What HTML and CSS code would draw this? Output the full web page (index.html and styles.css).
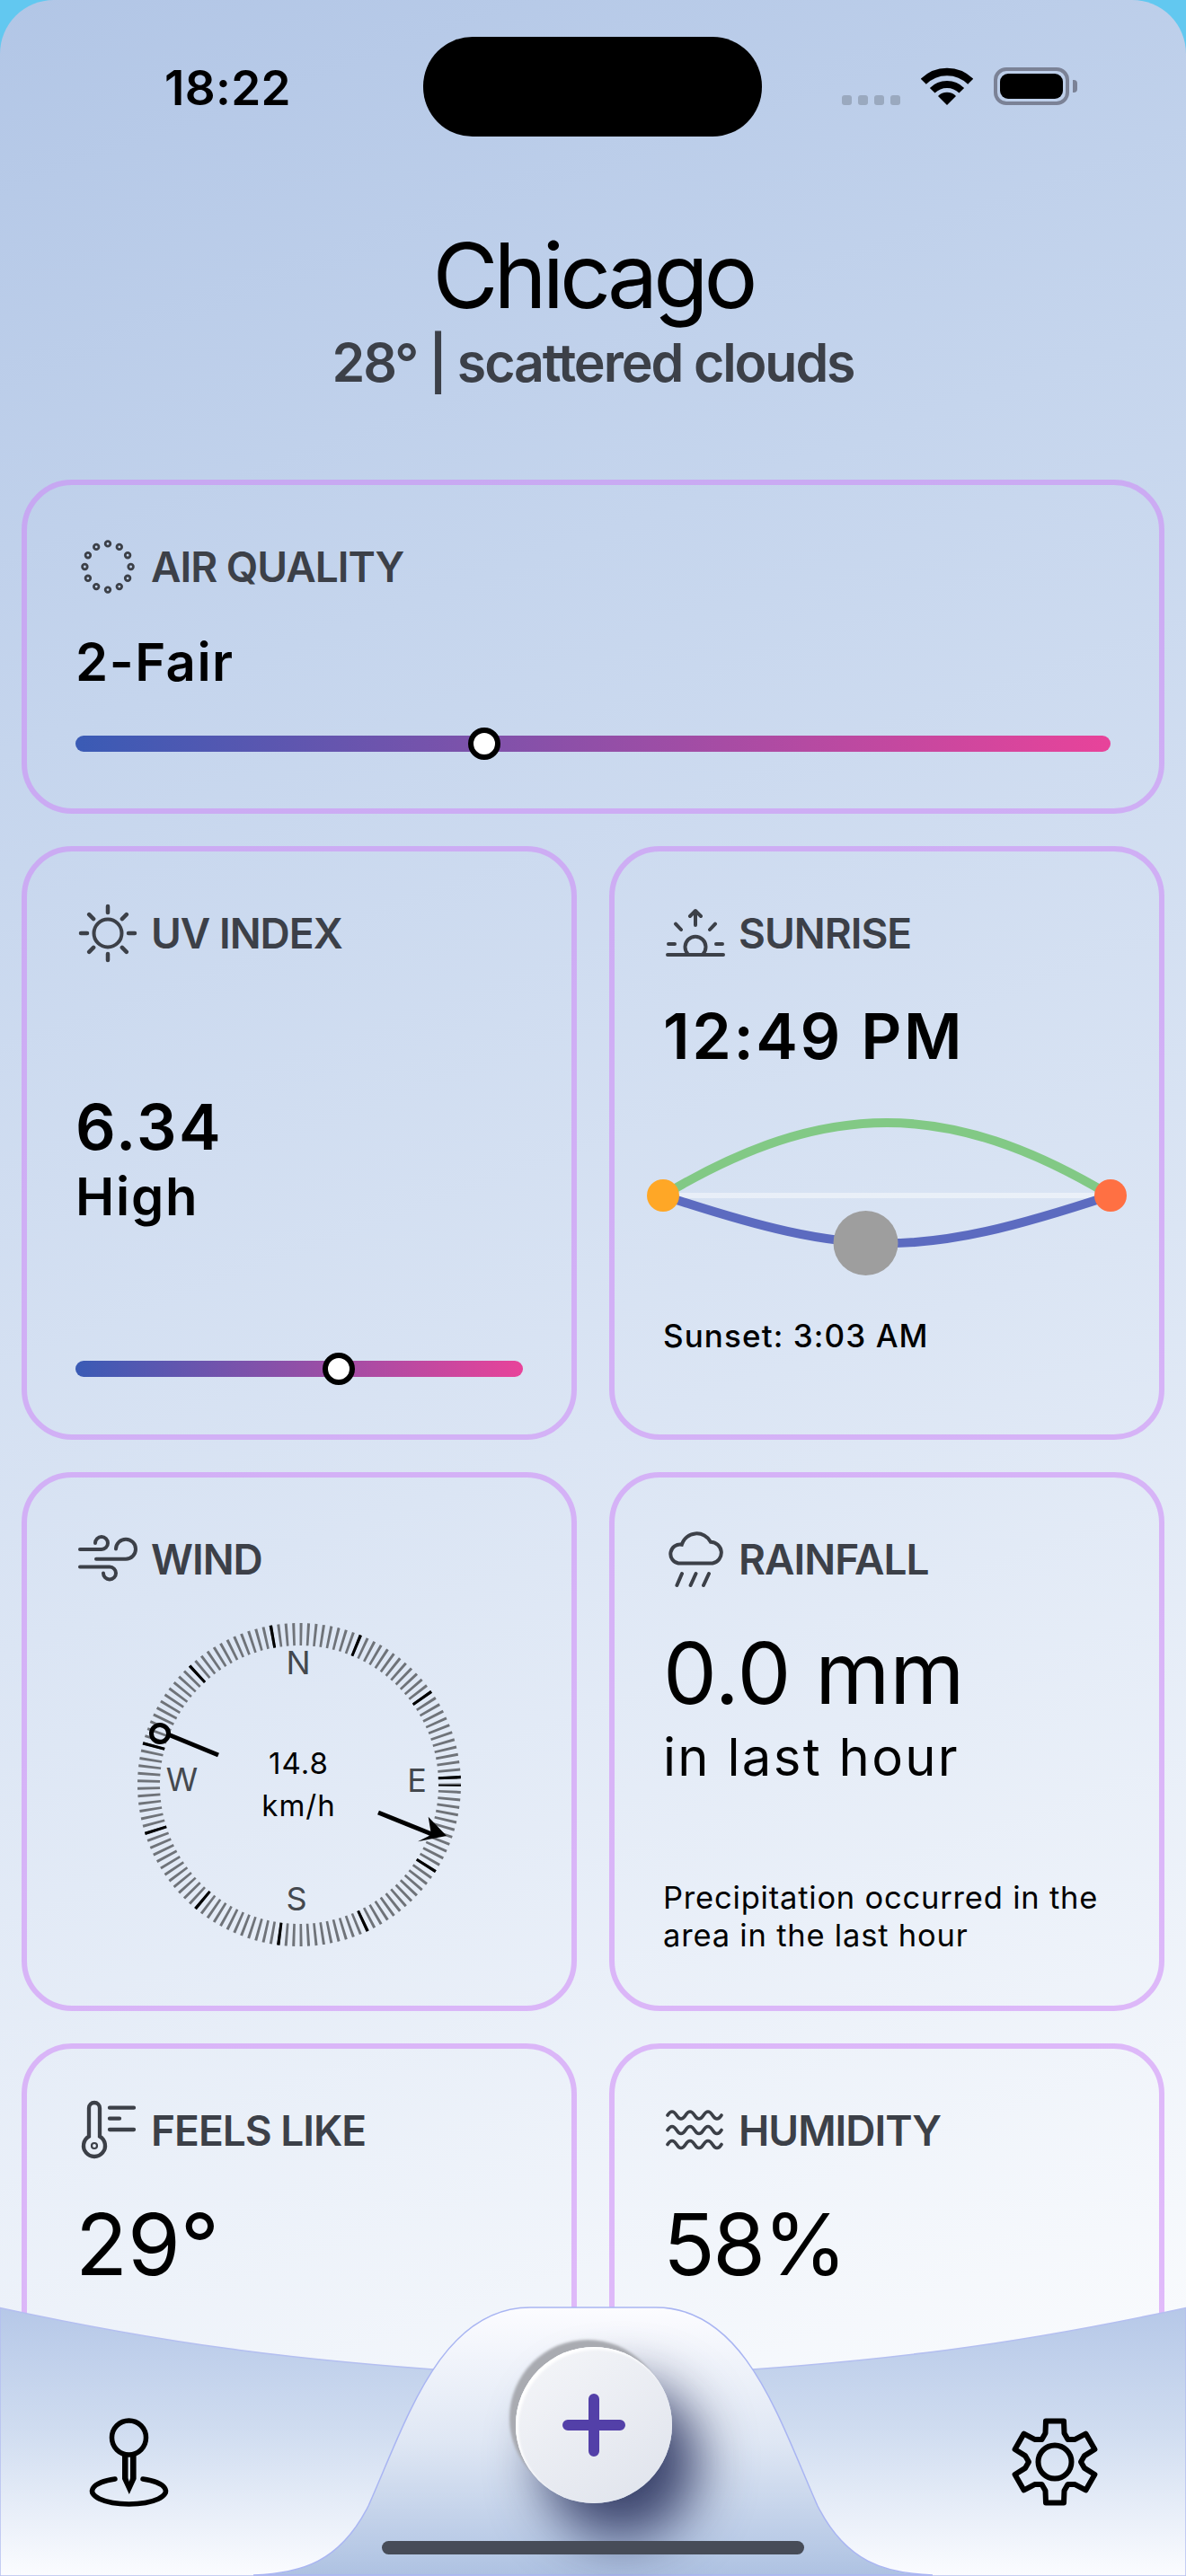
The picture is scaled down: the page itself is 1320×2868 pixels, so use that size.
FILE: index.html
```html
<!DOCTYPE html>
<html lang="en">

<head>
    <meta charset="UTF-8">
    <meta name="viewport" content="width=device-width, initial-scale=1.0">
    <title>Chicago weather</title>
    <link rel="stylesheet" href="styles.css">
</head>

<body>
    <div class="screen">
        <div class="status-bar">
            <span class="clock">18:22</span>
            <div class="island"></div>
            <div class="status-icons">
                <div class="signal"><i></i><i></i><i></i><i></i></div>
                <svg class="wifi" width="58" height="42" viewBox="0 0 58 42">
                    <path d="M2.8 15.8A37 37 0 0 1 55.2 15.8" fill="none" stroke="#000" stroke-width="8.5" />
                    <path d="M12.7 25.7A23 23 0 0 1 45.3 25.7" fill="none" stroke="#000" stroke-width="8" />
                    <path d="M29 42L19 32A14 14 0 0 1 39 32Z" fill="#000" />
                </svg>
                <div class="battery"><i></i></div>
            </div>
        </div>

        <header class="city">
            <h1>Chicago</h1>
            <p>28° | scattered clouds</p>
        </header>

        <main class="cards">
            <section class="card card-wide">
                <div class="card-head">
                    <svg class="icon" viewBox="0 0 72 72" fill="none" stroke="currentColor" stroke-width="2.8">
                        <circle cx="36" cy="10.4" r="2.8" />
                        <circle cx="48.8" cy="13.9" r="2.8" />
                        <circle cx="58.1" cy="23.2" r="2.8" />
                        <circle cx="61.6" cy="36" r="2.8" />
                        <circle cx="58.1" cy="48.8" r="2.8" />
                        <circle cx="48.8" cy="58.1" r="2.8" />
                        <circle cx="36" cy="61.6" r="2.8" />
                        <circle cx="23.2" cy="58.1" r="2.8" />
                        <circle cx="13.9" cy="48.8" r="2.8" />
                        <circle cx="10.4" cy="36" r="2.8" />
                        <circle cx="13.9" cy="23.2" r="2.8" />
                        <circle cx="23.2" cy="13.9" r="2.8" />
                    </svg>
                    <h2>AIR QUALITY</h2>
                </div>
                <div class="air-value">2-Fair</div>
                <div class="slider air-slider"><span class="thumb air-thumb"></span></div>
            </section>

            <section class="card">
                <div class="card-head">
                    <svg class="icon" viewBox="0 0 72 72" fill="none" stroke="currentColor" stroke-width="4.5" stroke-linecap="round">
                        <circle cx="36" cy="36" r="15.5" stroke-width="4" />
                        <path d="M36 6V13M36 59V66M6 36H13M59 36H66M15.2 15.2L20.1 20.1M51.9 51.9L56.8 56.8M15.2 56.8L20.1 51.9M51.9 20.1L56.8 15.2" />
                    </svg>
                    <h2>UV INDEX</h2>
                </div>
                <div class="uv-value">6.34</div>
                <div class="uv-level">High</div>
                <div class="slider uv-slider"><span class="thumb uv-thumb"></span></div>
            </section>

            <section class="card">
                <div class="card-head">
                    <svg class="icon" viewBox="0 0 72 72" fill="none" stroke="currentColor" stroke-width="4" stroke-linecap="round" stroke-linejoin="round">
                        <path d="M5 60H67M6 48H13M59 48H66M14 25.6L20 32M52 32L58 25.6M36 12V27M30 17L36 11L42 17" />
                        <path d="M27.5 59A11.5 11.5 0 1 1 44.5 59" />
                    </svg>
                    <h2>SUNRISE</h2>
                </div>
                <div class="sun-time">12:49 PM</div>
                <svg class="sun-path" width="558" height="190" viewBox="0 0 558 190" fill="none">
                    <path d="M30 91H528" stroke="#fff" stroke-opacity=".45" stroke-width="6" />
                    <path d="M30 91C210 -17 348 -17 528 91" stroke="#82c985" stroke-width="10" />
                    <path d="M30 91C245 162 313 162 528 91" stroke="#5c6bc0" stroke-width="10" />
                    <circle cx="30" cy="91" r="18" fill="#ffa726" />
                    <circle cx="528" cy="91" r="18" fill="#ff7043" />
                    <circle cx="255.5" cy="144" r="36" fill="#9e9e9e" />
                </svg>
                <div class="sun-set">Sunset: 3:03 AM</div>
            </section>

            <section class="card">
                <div class="card-head">
                    <svg class="icon" viewBox="0 0 72 72" fill="none" stroke="currentColor" stroke-width="4" stroke-linecap="round">
                        <path d="M5 25H29A7 7 0 1 0 22 18" />
                        <path d="M23 35.7H56A11 11 0 1 0 45 24.6" />
                        <path d="M5 44.5H38A7 7 0 1 1 31 51.5" />
                    </svg>
                    <h2>WIND</h2>
                </div>
                <svg class="compass" width="372" height="372" viewBox="0 0 372 372">
                    <!-- dial ticks, 133 around, every 12th one is dark -->
                    <circle cx="186" cy="186" r="167.5" fill="none" stroke="#6f7379" stroke-width="25" pathLength="133" stroke-dasharray=".36 .64" stroke-dashoffset=".18" />
                    <circle cx="186" cy="186" r="167.5" fill="none" stroke="#000" stroke-width="25" pathLength="133" stroke-dasharray=".4 11.6" stroke-dashoffset=".2" />
                    <text class="dial-letter" x="185" y="63">N</text>
                    <text class="dial-letter" x="183" y="326">S</text>
                    <text class="dial-letter" x="55.5" y="193">W</text>
                    <text class="dial-letter" x="317" y="194">E</text>
                    <text class="dial-speed" x="185.5" y="174">14.8</text>
                    <text class="dial-speed" x="185.5" y="221">km/h</text>
                    <path d="M96 153L40 130" stroke="#000" stroke-width="5" />
                    <circle cx="31" cy="129" r="9.5" fill="none" stroke="#000" stroke-width="5" />
                    <path d="M274 217L336 242" stroke="#000" stroke-width="5" />
                    <path d="M350 243L329.7 221.7L333 241.7L318 249.3Z" fill="#000" />
                </svg>
            </section>

            <section class="card">
                <div class="card-head">
                    <svg class="icon" viewBox="0 0 72 72" fill="none" stroke="currentColor" stroke-width="4" stroke-linecap="round">
                        <path d="M17 40.5H55A12 12 0 0 0 53 16.7A17.5 17.5 0 0 0 20.8 19.7A10.5 10.5 0 0 0 17 40.5Z" />
                        <path d="M15.4 65L21 52M30.6 65L36.5 52M45 65L51 52" />
                    </svg>
                    <h2>RAINFALL</h2>
                </div>
                <div class="big-value">0.0 mm</div>
                <div class="rain-unit">in last hour</div>
                <p class="rain-note">Precipitation occurred in the area in the last hour</p>
            </section>

            <section class="card">
                <div class="card-head">
                    <svg class="icon" viewBox="0 0 72 72" fill="none" stroke="currentColor" stroke-width="4.3" stroke-linecap="round">
                        <path d="M15 42.6V11A6 6 0 0 1 27 11V42.6A12 12 0 1 1 15 42.6Z" />
                        <circle cx="21" cy="53" r="3" stroke-width="2.2" />
                        <path d="M38 10.7H65M38 22.7H49M38 35H65" />
                    </svg>
                    <h2>FEELS LIKE</h2>
                </div>
                <div class="big-value">29°</div>
            </section>

            <section class="card">
                <div class="card-head">
                    <svg class="icon" viewBox="0 0 72 72" fill="none" stroke="currentColor" stroke-width="3.6" stroke-linecap="round">
                        <path d="M5 19q5 -8 10 0t10 0t10 0t10 0t10 0t10 0" />
                        <path d="M5 35.5q5 -8 10 0t10 0t10 0t10 0t10 0t10 0" />
                        <path d="M5 51.5q5 -8 10 0t10 0t10 0t10 0t10 0t10 0" />
                    </svg>
                    <h2>HUMIDITY</h2>
                </div>
                <div class="big-value humidity-value">58%</div>
            </section>
        </main>

        <nav class="dock">
            <svg class="dock-shape" width="1320" height="300" viewBox="0 0 1320 300">
                <defs>
                    <linearGradient id="wave-fill" x1="0" y1="0" x2="0" y2="1">
                        <stop offset="0" stop-color="#b6c8e8" />
                        <stop offset=".45" stop-color="#cfdcf0" />
                        <stop offset="1" stop-color="#fbfcff" />
                    </linearGradient>
                    <linearGradient id="hump-fill" x1="0" y1="0" x2="0" y2="1">
                        <stop offset="0" stop-color="#fcfcff" />
                        <stop offset=".5" stop-color="#dfe7f4" />
                        <stop offset="1" stop-color="#aec2e2" />
                    </linearGradient>
                </defs>
                <path d="M0 1.4C160 36 330 66 660 80C990 66 1160 36 1320 1.4V300H0Z" fill="url(#wave-fill)" stroke="#b4bff0" stroke-width="1.5" />
                <path d="M282 299C335 297 378 285 410 222C452 128 490 1 590 1H730C830 1 868 128 910 222C942 285 985 297 1038 299Z" fill="url(#hump-fill)" stroke="#a9b5f2" stroke-width="1.5" />
            </svg>
            <div class="dock-row">
                <svg class="dock-icon" width="100" height="110" viewBox="0 0 100 110">
                    <circle cx="50.5" cy="29" r="19" fill="none" stroke="#000" stroke-width="5.5" />
                    <path d="M43 46V75L50.8 92L58.6 75V46ZM49.5 50H52V74L50.8 78L49.5 74Z" fill="#000" fill-rule="evenodd" />
                    <path d="M35 75A41 14.5 0 1 0 66 75" fill="none" stroke="#000" stroke-width="5.5" stroke-linecap="round" />
                </svg>
                <button class="add-btn" type="button" aria-label="Add city">
                    <svg width="70" height="70" viewBox="0 0 70 70">
                        <path d="M35 6V64M6 35H64" stroke="#5340a8" stroke-width="12" stroke-linecap="round" />
                    </svg>
                </button>
                <svg class="dock-icon gear" width="110" height="110" viewBox="-55 -56 110 110" fill="none" stroke="#000" stroke-width="6" stroke-linejoin="round">
                    <circle r="18.5" />
                    <path d="M-14.5 -25L-10.5 -32L-10 -45.5H10L10.5 -32L14.5 -25L22.5 -25.1L34.4 -31.4L44.4 -14L33 -6.9L29 0L33 6.9L44.4 14L34.4 31.4L22.5 25.1L14.5 25L10.5 32L10 45.5H-10L-10.5 32L-14.5 25L-22.5 25.1L-34.4 31.4L-44.4 14L-33 6.9L-29 0L-33 -6.9L-44.4 -14L-34.4 -31.4L-22.5 -25.1Z" />
                </svg>
            </div>
            <div class="home-bar"></div>
        </nav>
    </div>
</body>

</html>
```

FILE: styles.css
```css
html,
body {
    margin: 0;
    padding: 0;
    background-color: #62c8f0;
    font-family: Inter, "Liberation Sans", sans-serif;
    color: #000;
}

h1,
h2,
p {
    margin: 0;
    font-weight: inherit;
}

.screen {
    position: relative;
    width: 1320px;
    height: 2868px;
    overflow: hidden;
    border-radius: 60px 60px 0 0;
    background: linear-gradient(160deg, #b2c6e6 0%, #c5d5ed 25%, #dbe5f4 55%, #ffffff 100%);
}

/* status bar */
.status-bar {
    display: grid;
    grid-template-columns: 199px 377px auto;
    column-gap: 89px;
    padding: 41px 0 0 183px;
    height: 111px;
}

.clock {
    margin-top: 25px;
    font-size: 53px;
    font-weight: 600;
    line-height: 64px;
    letter-spacing: 0.3px;
}

.island {
    height: 111px;
    border-radius: 55px;
    background-color: #000;
}

.status-icons {
    display: flex;
    align-items: flex-end;
    height: 76px;
}

.signal {
    display: flex;
    gap: 7px;
    margin-right: 23px;
}

.signal i {
    width: 11px;
    height: 11px;
    border-radius: 3px;
    background-color: #9aa9bf;
}

.wifi {
    margin-right: 23px;
}

.battery {
    position: relative;
    box-sizing: border-box;
    width: 84px;
    height: 42px;
    padding: 3px;
    border: 4px solid #7b8296;
    border-radius: 14px;
}

.battery i {
    display: block;
    height: 100%;
    border-radius: 9px;
    background-color: #000;
}

.battery::after {
    content: "";
    position: absolute;
    top: 10px;
    right: -13px;
    width: 5px;
    height: 14px;
    border-radius: 0 4px 4px 0;
    background-color: #7b8296;
}

/* city heading */
.city {
    padding: 95px 0;
    text-align: center;
}

.city h1 {
    font-size: 100px;
    font-weight: 400;
    line-height: 120px;
    letter-spacing: -5px;
}

.city p {
    margin-top: 2px;
    font-size: 59px;
    font-weight: 600;
    line-height: 70px;
    letter-spacing: -2.1px;
    color: #3c4048;
}

/* cards */
.cards {
    display: grid;
    grid-template-columns: 618px 618px;
    grid-template-rows: 372px 661px 600px 600px;
    gap: 36px;
    padding: 0 24px;
}

.card {
    box-sizing: border-box;
    padding: 55px 54px 0;
    border: 6px solid rgba(205, 135, 248, 0.55);
    border-radius: 56px;
}

.card-wide {
    grid-column: 1 / 3;
}

.card-head {
    display: flex;
    align-items: center;
    gap: 12px;
    height: 72px;
    color: #3c4048;
}

.icon {
    width: 72px;
    height: 72px;
    flex: none;
}

.card-head h2 {
    font-size: 46px;
    font-weight: 600;
    letter-spacing: -1px;
}

.air-value {
    margin-top: 35px;
    font-size: 58px;
    font-weight: 600;
    line-height: 70px;
    letter-spacing: 1.5px;
}

.slider {
    position: relative;
    height: 18px;
    border-radius: 9px;
    background: linear-gradient(90deg, #3a5bb5, #e8439a);
}

.air-slider {
    margin-top: 47px;
}

.uv-slider {
    margin-top: 148px;
}

.thumb {
    position: absolute;
    top: -9px;
    box-sizing: border-box;
    width: 36px;
    height: 36px;
    margin-left: -18px;
    border: 6px solid #000;
    border-radius: 50%;
    background-color: #fff;
}

.air-thumb {
    left: 39.5%;
}

.uv-thumb {
    left: 58.9%;
}

.uv-value {
    margin-top: 140px;
    font-size: 70px;
    font-weight: 600;
    line-height: 80px;
    letter-spacing: 2.4px;
}

.uv-level {
    margin-top: 2px;
    font-size: 58px;
    font-weight: 600;
    line-height: 70px;
    letter-spacing: 1.8px;
}

.sun-time {
    margin-top: 39px;
    font-size: 70px;
    font-weight: 600;
    line-height: 80px;
    letter-spacing: 2.6px;
}

.sun-path {
    display: block;
    margin: 46px -30px 0;
}

.sun-set {
    margin-top: 36px;
    font-size: 35px;
    font-weight: 500;
    line-height: 42px;
    letter-spacing: 1.1px;
}

.compass {
    display: block;
    margin: 29px auto 0;
}

.dial-letter {
    font-size: 36px;
    fill: #44484e;
    text-anchor: middle;
}

.dial-speed {
    font-size: 33px;
    letter-spacing: 1px;
    text-anchor: middle;
}

.big-value {
    margin-top: 36px;
    font-size: 95px;
    line-height: 110px;
}

.humidity-value {
    letter-spacing: -2.5px;
}

.rain-unit {
    margin-top: 3px;
    font-size: 58px;
    line-height: 70px;
    letter-spacing: 2.3px;
}

.rain-note {
    margin-top: 101px;
    font-size: 34.5px;
    line-height: 42px;
    letter-spacing: 0.8px;
}

/* bottom dock, sits over the cards */
.dock {
    position: absolute;
    left: 0;
    right: 0;
    bottom: 0;
    height: 300px;
}

.dock-shape {
    position: absolute;
    top: 0;
    left: 0;
}

.dock-row {
    position: relative;
    display: grid;
    grid-template-columns: 1fr 174px 1fr;
    padding: 45px 91px 0 93px;
}

.dock-icon {
    margin-top: 72px;
}

.gear {
    justify-self: end;
}

.add-btn {
    display: flex;
    align-items: center;
    justify-content: center;
    width: 174px;
    height: 174px;
    padding: 0;
    border: 0;
    border-radius: 50%;
    background: linear-gradient(145deg, #f5f6f9, #dfe3ec);
    box-shadow: inset 3px 3px 3px #fff, -7px -8px 3px #a9abb1, 30px 40px 60px rgba(50, 58, 100, 0.95);
}

.home-bar {
    position: absolute;
    left: 425px;
    bottom: 24px;
    width: 470px;
    height: 15px;
    border-radius: 8px;
    background-color: #474c58;
}
```
